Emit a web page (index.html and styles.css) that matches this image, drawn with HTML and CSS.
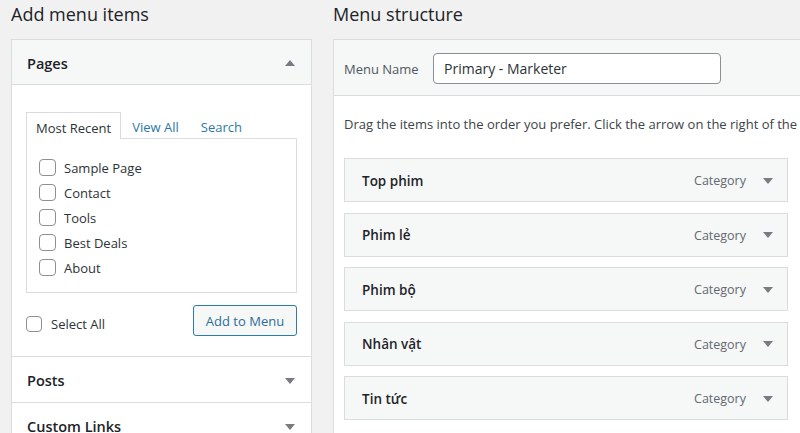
FILE: index.html
```html
<!DOCTYPE html>
<html>
<head>
<meta charset="utf-8">
<link rel="stylesheet" href="styles.css">
</head>
<body>
<div class="wrap">
  <div class="col-left">
    <h2 class="col-title">Add menu items</h2>
    <div class="panel">
      <div class="sec sec-open">
        <div class="sec-head"><span>Pages</span><span class="tri tri-up"></span></div>
        <div class="sec-body">
          <div class="tabs">
            <span class="tab tab-active">Most Recent</span>
            <span class="tab">View All</span>
            <span class="tab">Search</span>
          </div>
          <ul class="tab-panel">
            <li><span class="cb"></span>Sample Page</li>
            <li><span class="cb"></span>Contact</li>
            <li><span class="cb"></span>Tools</li>
            <li><span class="cb"></span>Best Deals</li>
            <li><span class="cb"></span>About</li>
          </ul>
          <div class="actions">
            <label class="select-all"><span class="cb"></span>Select All</label>
            <button class="btn">Add to Menu</button>
          </div>
        </div>
      </div>
      <div class="sec">
        <div class="sec-head"><span>Posts</span><span class="tri"></span></div>
      </div>
      <div class="sec">
        <div class="sec-head"><span>Custom Links</span><span class="tri"></span></div>
      </div>
    </div>
  </div>
  <div class="col-right">
    <h2 class="col-title">Menu structure</h2>
    <div class="panel panel-right">
      <div class="menu-head">
        <span class="label">Menu Name</span>
        <div class="input">Primary - Marketer</div>
      </div>
      <div class="menu-body">
        <p class="hint">Drag the items into the order you prefer. Click the arrow on the right of the item to reveal additional configuration options.</p>
        <div class="items">
          <div class="item"><span class="item-title">Top phim</span><span class="item-type">Category</span><span class="tri"></span></div>
          <div class="item"><span class="item-title">Phim lẻ</span><span class="item-type">Category</span><span class="tri"></span></div>
          <div class="item"><span class="item-title">Phim bộ</span><span class="item-type">Category</span><span class="tri"></span></div>
          <div class="item"><span class="item-title">Nhân vật</span><span class="item-type">Category</span><span class="tri"></span></div>
          <div class="item"><span class="item-title">Tin tức</span><span class="item-type">Category</span><span class="tri"></span></div>
        </div>
      </div>
    </div>
  </div>
</div>
</body>
</html>
```

FILE: styles.css
```css
* { box-sizing: border-box; }
html, body { margin: 0; padding: 0; }
body {
  background: #f1f1f1;
  font-family: "Open Sans", "Noto Sans", sans-serif;
  color: #1d2327;
  overflow: hidden;
  width: 800px;
  height: 433px;
}
.wrap {
  display: flex;
  gap: 21px;
  padding-left: 11px;
}
.col-left { width: 301px; flex: none; }
.col-right { width: 520px; flex: none; }
.col-title {
  margin: 0;
  height: 39px;
  padding-top: 1px;
  font-size: 18px;
  font-weight: 400;
  line-height: 26px;
  color: #1d2327;
}
.panel {
  background: #fff;
  border: 1px solid #dcdcde;
}
.sec { border-bottom: 1px solid #dcdcde; }
.sec-head {
  height: 45px;
  display: flex;
  align-items: center;
  justify-content: space-between;
  padding: 2px 16px 0 15px;
  font-size: 14.5px;
  font-weight: 600;
}
.sec-open .sec-head {
  background: #f6f7f7;
  border-bottom: 1px solid #dcdcde;
}
.tri {
  width: 0; height: 0;
  border-left: 5px solid transparent;
  border-right: 5px solid transparent;
  border-top: 6px solid #787c82;
}
.tri-up {
  border-top: 0;
  border-bottom: 6px solid #787c82;
}
.sec-body { padding: 27px 14px 20px 14px; }
.tabs {
  display: flex;
  align-items: flex-end;
  height: 26px;
  font-size: 13px;
}
.tab {
  color: #2b78a8;
  padding: 3px 10px 0 10px;
  line-height: 26px;
  height: 27px;
}
.tab-active {
  color: #2c3338;
  border: 1px solid #dcdcde;
  border-bottom: 0;
  background: #fff;
  margin-bottom: -1px;
  position: relative;
  padding: 2px 9px 0 9px;
}
.tab-active + .tab { padding-left: 11px; }
.tab-active + .tab + .tab { padding-left: 12px; }
.tab-panel {
  list-style: none;
  margin: 0;
  height: 155px;
  border: 1px solid #dcdcde;
  padding: 16px 12px 0 12px;
  font-size: 13px;
  color: #2c3338;
}
.tab-panel li {
  display: flex;
  align-items: center;
  height: 25px;
}
.cb {
  width: 17px; height: 17px;
  flex: none;
  border: 1px solid #8c8f94;
  border-radius: 4px;
  background: #fff;
  margin-right: 8px;
}
.actions {
  display: flex;
  justify-content: space-between;
  align-items: center;
  margin-top: 12px;
}
.select-all {
  display: flex;
  align-items: center;
  font-size: 13px;
  color: #2c3338;
  padding-top: 6px;
}
.select-all .cb { width: 16px; height: 16px; margin-right: 9px; }
.btn {
  font-family: inherit;
  font-size: 13px;
  color: #2b6f98;
  background: #f6f7f7;
  border: 1px solid #2b7bac;
  border-radius: 3px;
  height: 31px;
  width: 104px;
  padding: 0;
}
.panel-right { border-right: 0; }
.menu-head {
  height: 56px;
  background: #f6f7f7;
  border-bottom: 1px solid #dcdcde;
  display: flex;
  align-items: center;
  padding: 1px 0 0 10px;
}
.label {
  font-size: 13px;
  color: #50575e;
  width: 89px;
  padding-top: 2px;
}
.input {
  width: 288px;
  height: 31px;
  border: 1px solid #8c8f94;
  border-radius: 4px;
  background: #fff;
  font-size: 14px;
  color: #2c3338;
  line-height: 29px;
  padding-left: 10px;
}
.menu-body {
  padding: 18px 0 20px 10px;
}
.hint {
  margin: 0 0 24px 0;
  font-size: 13px;
  line-height: 20px;
  white-space: nowrap;
  color: #3c434a;
}
.items {
  display: flex;
  flex-direction: column;
  gap: 10.5px;
}
.item {
  width: 444px;
  height: 44px;
  border: 1px solid #dcdcde;
  background: #f6f7f7;
  display: flex;
  align-items: center;
  padding: 1px 14px 0 17px;
}
.item-title {
  flex: 1;
  font-size: 13.5px;
  font-weight: 600;
  color: #1d2327;
}
.item-type {
  font-size: 12.5px;
  color: #646970;
  margin-right: 17px;
}
```
